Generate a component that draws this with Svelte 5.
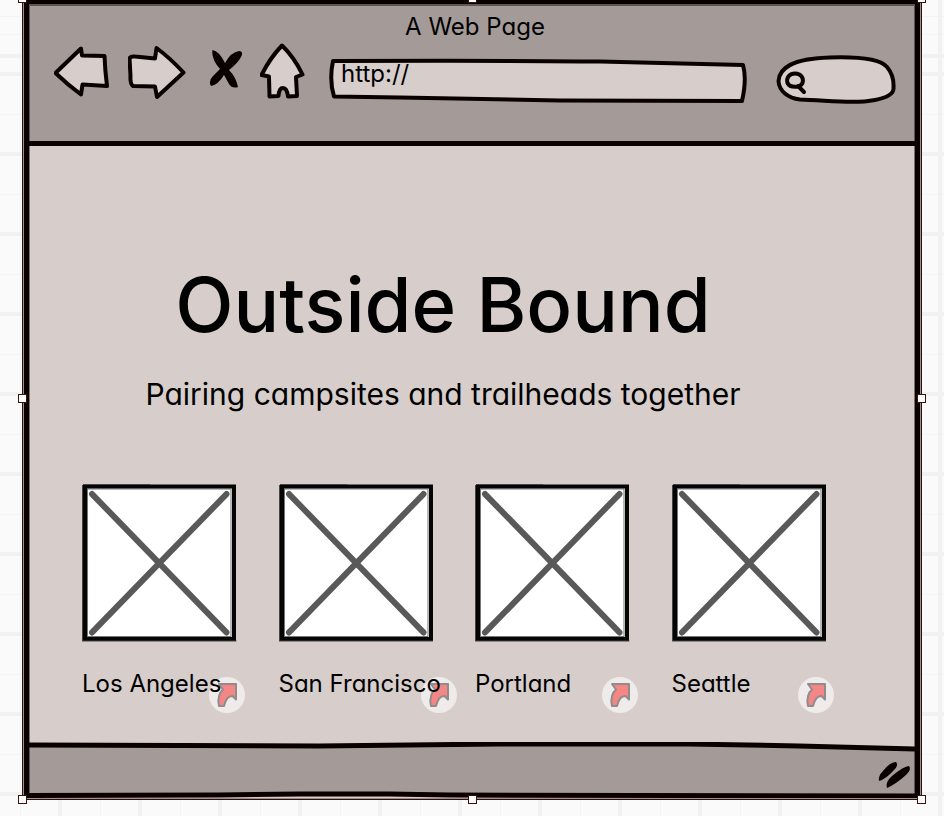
<script>
  const places = ['Los Angeles', 'San Francisco', 'Portland', 'Seattle'];
  const handles = ['tl', 'tc', 'tr', 'ml', 'mr', 'bl', 'bc', 'br'];
  let address = $state('http://');
  let query = $state('');
</script>

<div class="canvas">
  <div class="selection">
    <div class="window">
      <header>
        <div class="title">A Web Page</div>
        <div class="toolbar">
          <button class="back" aria-label="Back">
            <svg width="56" height="64" viewBox="54 42 56 64">
              <path class="shape" d="M55.500 73 L81 48.500 L82 55.500 L104.500 56 Q105 70 107 86 L82.500 84.500 L81 94.500 Q68 85 55.500 73 Z" />
            </svg>
          </button>
          <button class="forward" aria-label="Forward">
            <svg width="58" height="64" viewBox="128 42 58 64">
              <path class="shape" d="M129.500 58 Q131 56 135 56.500 L155 58.500 L156.500 48 Q170 58 183.500 72.500 L157 97 L155 86.500 L133 86 Q130 84 130.500 76 Z" />
            </svg>
          </button>
          <button class="stop" aria-label="Stop">
            <svg width="38" height="64" viewBox="204 42 38 64">
              <path class="ink" d="M212.500 50 Q219 51 225 63 Q231 52 239 51 Q244 51 241 57 Q238 63 229 70 Q236 77 238 87 Q232 89 229 84 L224 75 Q218 85 211 86 Q208 81 213 76 L220 69 Q211 59 212.500 50 Z" />
            </svg>
          </button>
          <button class="home" aria-label="Home">
            <svg width="51" height="64" viewBox="260 42 51 64">
              <path class="shape" d="M282 45.500 Q294 57 302.500 74.500 L296 77 L297 96 L288 96.500 Q287 88 283 88 Q279 88 278.500 96 L269.500 96.500 L269 76.500 L261.500 75 Q270 58 282 45.500 Z" />
            </svg>
          </button>
          <label class="address">
            <svg viewBox="329 42 419 64" preserveAspectRatio="none" aria-hidden="true">
              <path class="shape" d="M333 61 Q520 60.500 600 61.500 L743 65 Q747 79 742 101 L560 100.500 L400 97.500 L334 96.500 Q329 80 333 61 Z" />
            </svg>
            <input type="text" aria-label="Address" bind:value={address} />
          </label>
          <label class="search">
            <svg viewBox="766 42 130 64" preserveAspectRatio="none" aria-hidden="true">
              <path class="shape" d="M778.500 81 C779 70 790 58.500 830 57.500 C862 56.500 881 60 887 67 C893 74 894 80 893.500 88 C894 95 885 98 875 100 C855 104 830 100.500 800 99.500 C788 98 779 91 778.500 81 Z" />
              <path class="lens" d="M795 73.500 C801 73.500 804 78 802.500 83 C800 88 790 88 787.500 83 C786 77 790 73.500 795 73.500 Z M798 86 L804 92" />
            </svg>
            <input type="search" aria-label="Search" bind:value={query} />
          </label>
        </div>
      </header>

      <main>
        <h1>Outside Bound</h1>
        <p>Pairing campsites and trailheads together</p>
        <ul>
          {#each places as place}
            <li>
              <svg class="photo" viewBox="0 0 154 157" aria-hidden="true">
                <rect x="2" y="2" width="150" height="153" fill="#fff" />
                <path d="M10 10 L144 148 M144 10 L10 148" stroke="#59595a" stroke-width="6" stroke-linecap="round" />
                <path d="M5.500 5 H148.500 V152 H5.500 Z" fill="none" stroke="#777" stroke-width="1" />
                <path d="M3 2.500 L151.500 2.500 V154.500 L3 154.500 Z" fill="none" stroke="#050505" stroke-width="4" />
                <path d="M0.500 1 V157 M1 0.500 H68 M1 156.500 H154" stroke="#474444" stroke-width="1" />
              </svg>
              <a href="#{place}">
                <svg class="badge" width="36" height="36" viewBox="0 0 36 36" aria-hidden="true">
                  <circle cx="18" cy="18" r="18" fill="#efebea" />
                  <path d="M10 7 H27 V22.500 L23.500 19 C19 19 17 22 15 29 L10 29 C8 21 11 15 14 12.500 Z" fill="#f58686" stroke="#918b8a" stroke-width="2" stroke-linejoin="round" />
                </svg>
                <span>{place}</span>
              </a>
            </li>
          {/each}
        </ul>
      </main>

      <footer>
        <svg class="bar" viewBox="0 0 886 56" preserveAspectRatio="none" aria-hidden="true">
          <path class="barfill" d="M0 3 L290 4 L470 2 L660 2 L770 4 L886 7 V54 L420 53 L360 52 L270 52 L190 53 L0 53 Z" />
          <path class="line" d="M0 3 L290 4 L470 2 L660 2 L770 4 L886 7 M0 53.500 L190 53 L270 52 L360 52 L420 53 L886 54" />
        </svg>
        <svg class="grip" width="34" height="28" viewBox="878 759 34 28" aria-hidden="true">
          <path class="ink" d="M879 779 Q878 774 883 769 Q890 760 896 760 Q899 763 894 768 Q886 777 879 779 Z M887 786 Q885 780 892 774 Q904 764 909 764 Q912 767 906 773 Q896 782 887 786 Z" />
        </svg>
      </footer>
    </div>
    {#each handles as h}
      <i class="handle {h}"></i>
    {/each}
  </div>
</div>

<style>
  :global(body) {
    margin: 0;
    background: #fafafa;
  }
  .canvas {
    min-height: 100vh;
    box-sizing: border-box;
    padding: 0 22px 18px;
    overflow: hidden;
    background:
      repeating-linear-gradient(90deg, #f1f1f1 0 4px, transparent 4px 80px) 58px 0,
      repeating-linear-gradient(180deg, #f1f1f1 0 4px, transparent 4px 80px) 0 72px,
      repeating-linear-gradient(90deg, #f4f4f4 0 1px, transparent 1px 80px) 20px 0,
      repeating-linear-gradient(180deg, #f4f4f4 0 1px, transparent 1px 80px) 0 34px,
      #fafafa;
    font-family: Inter, Lato, sans-serif;
    font-feature-settings: 'cv11' 1;
    color: #000;
  }
  .selection {
    position: relative;
    border: 1px solid #2e0f09;
    border-top: 0;
    padding: 0 1px 1px;
    background: #9b9190;
  }
  .window {
    position: relative;
    border: solid #0a0000;
    border-width: 4px 5px 0;
    background: #d7cecc;
  }
  .window::after {
    content: '';
    position: absolute;
    inset: 0;
    border: solid rgba(10, 0, 0, 0.45);
    border-width: 2px 1px 0;
    pointer-events: none;
  }
  header {
    background: #a49b99;
    border-bottom: 5px solid #0a0000;
    padding: 8px 19px 35px 25px;
  }
  .title {
    text-align: center;
    font-size: 24px;
    line-height: 30px;
  }
  .toolbar {
    display: flex;
    gap: 18px;
  }
  button {
    flex: none;
    padding: 0;
    border: 0;
    background: none;
    cursor: pointer;
  }
  svg {
    display: block;
  }
  .shape {
    fill: #d7cecc;
    stroke: #0a0000;
    stroke-width: 4;
    stroke-linejoin: round;
    vector-effect: non-scaling-stroke;
  }
  .ink {
    fill: #0a0000;
  }
  .lens {
    fill: none;
    stroke: #0a0000;
    stroke-width: 4;
    stroke-linecap: round;
  }
  .address,
  .search {
    position: relative;
    display: flex;
    align-items: center;
    height: 64px;
  }
  .address {
    flex: 1;
    min-width: 0;
  }
  .search {
    width: 130px;
  }
  .address svg,
  .search svg {
    position: absolute;
    inset: 0;
    width: 100%;
    height: 100%;
  }
  input {
    position: relative;
    width: 100%;
    box-sizing: border-box;
    border: 0;
    outline: 0;
    padding: 10px 12px;
    background: none;
    font: inherit;
    font-size: 24px;
    line-height: 30px;
    color: inherit;
    appearance: none;
  }
  .search input {
    padding-left: 44px;
    font-size: 18px;
  }
  main {
    padding: 108px 89px 42px 53px;
  }
  h1,
  p {
    margin: 0 22px 0 0;
    text-align: center;
    white-space: nowrap;
  }
  h1 {
    font-size: 76px;
    line-height: 100px;
    font-weight: 500;
  }
  p {
    padding-top: 20px;
    font-size: 30px;
    line-height: 40px;
  }
  ul {
    display: grid;
    grid-template-columns: repeat(4, minmax(0, 1fr));
    gap: 42px;
    margin: 0;
    padding: 70px 0 0;
    list-style: none;
  }
  .photo {
    width: 100%;
  }
  a {
    position: relative;
    display: block;
    box-sizing: border-box;
    width: max-content;
    min-width: 100%;
    margin-top: 26px;
    padding-right: 8px;
    font-size: 24px;
    line-height: 32px;
    color: inherit;
    text-decoration: none;
    white-space: nowrap;
  }
  a span {
    position: relative;
  }
  .badge {
    position: absolute;
    right: -8px;
    top: 9px;
  }
  footer {
    position: relative;
    display: flex;
    justify-content: flex-end;
    align-items: center;
    height: 56px;
    padding-right: 3px;
  }
  .bar {
    position: absolute;
    inset: 0;
    width: 100%;
    height: 100%;
  }
  .barfill {
    fill: #a49b99;
  }
  .line {
    fill: none;
    stroke: #0a0000;
    stroke-width: 5;
    vector-effect: non-scaling-stroke;
  }
  .grip {
    position: relative;
    margin-top: 10px;
  }
  .handle {
    position: absolute;
    box-sizing: border-box;
    width: 9px;
    height: 9px;
    border: 1px solid #3a1208;
    background: #fff;
  }
  .tl, .ml, .bl { left: -5px; }
  .tr, .mr, .br { right: -5px; }
  .tc, .bc { left: calc(50% - 4px); }
  .tl, .tc, .tr { top: -6px; }
  .ml, .mr { top: calc(50% - 5px); }
  .bl, .bc, .br { bottom: -5px; }
</style>
